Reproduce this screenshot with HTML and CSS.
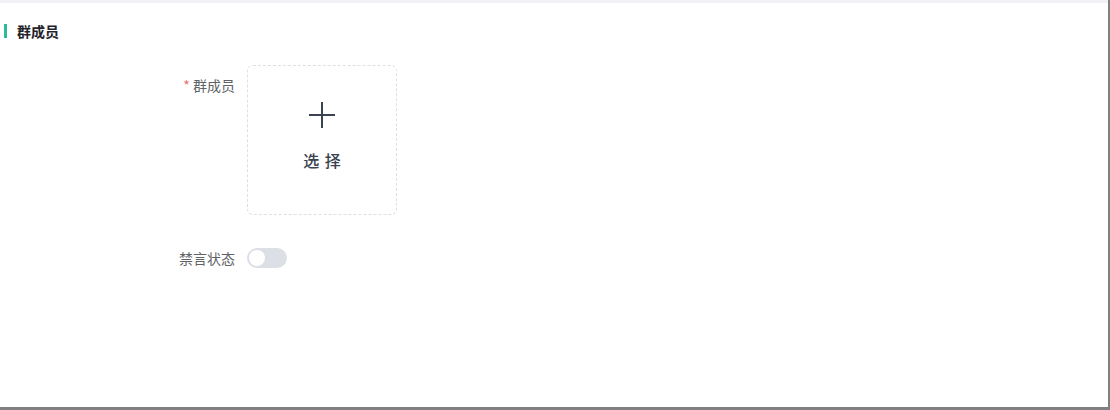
FILE: index.html
```html
<!DOCTYPE html>
<html lang="zh">
<head>
<meta charset="utf-8">
<link rel="stylesheet" href="styles.css">
</head>
<body>
<div class="page">
  <div class="topstrip"></div>
  <div class="section-title"><span class="accent"></span><span class="title-text">群成员</span></div>
  <div class="form">
    <div class="row row-members">
      <label class="label"><span class="req">*</span> 群成员</label>
      <div class="upload">
        <svg class="plus" width="26" height="26" viewBox="0 0 26 26"><path d="M13 0V26M0 13H26" stroke="#3b4250" stroke-width="2" fill="none"/></svg>
        <span class="upload-text">选 择</span>
      </div>
    </div>
    <div class="row row-switch">
      <label class="label">禁言状态</label>
      <div class="switch"><span class="knob"></span></div>
    </div>
  </div>
</div>
</body>
</html>
```
FILE: styles.css
```css
html, body { margin: 0; padding: 0; }
body {
  background: #808080;
  font-family: "Noto Sans CJK SC", "Noto Sans", sans-serif;
  width: 1110px;
  height: 410px;
  overflow: hidden;
}
.page {
  width: 1108px;
  height: 407px;
  background: #fff;
}
.topstrip { height: 3px; background: #f0f2f5; }
.section-title {
  display: flex;
  align-items: center;
  height: 14px;
  margin-top: 21px;
  padding-left: 4px;
}
.accent {
  width: 3px;
  height: 14px;
  background: #2bbb96;
}
.title-text {
  margin-left: 10px;
  font-size: 14px;
  font-weight: 700;
  color: #1f2329;
  line-height: 14px;
}
.form { margin-top: 27px; }
.row { display: flex; align-items: flex-start; }
.label {
  width: 247px;
  box-sizing: border-box;
  padding-right: 12px;
  text-align: right;
  font-size: 14px;
  color: #606266;
  line-height: 20px;
}
.row-members .label { padding-top: 10px; }
.req { color: #f56c6c; }
.upload {
  width: 150px;
  height: 150px;
  box-sizing: border-box;
  border: 1px dashed #dcdfe6;
  border-radius: 6px;
  display: flex;
  flex-direction: column;
  align-items: center;
}
.plus { margin-top: 36px; }
.upload-text {
  margin-top: 21px;
  font-size: 16px;
  font-weight: 500;
  letter-spacing: 1px;
  color: #3b4250;
  padding-left: 1px;
  line-height: 22px;
}
.row-switch { margin-top: 33px; align-items: center; }
.switch {
  width: 40px;
  height: 20px;
  border-radius: 10px;
  background: #dcdfe6;
  position: relative;
}
.knob {
  position: absolute;
  left: 2px;
  top: 2px;
  width: 16px;
  height: 16px;
  border-radius: 50%;
  background: #fff;
}
```
